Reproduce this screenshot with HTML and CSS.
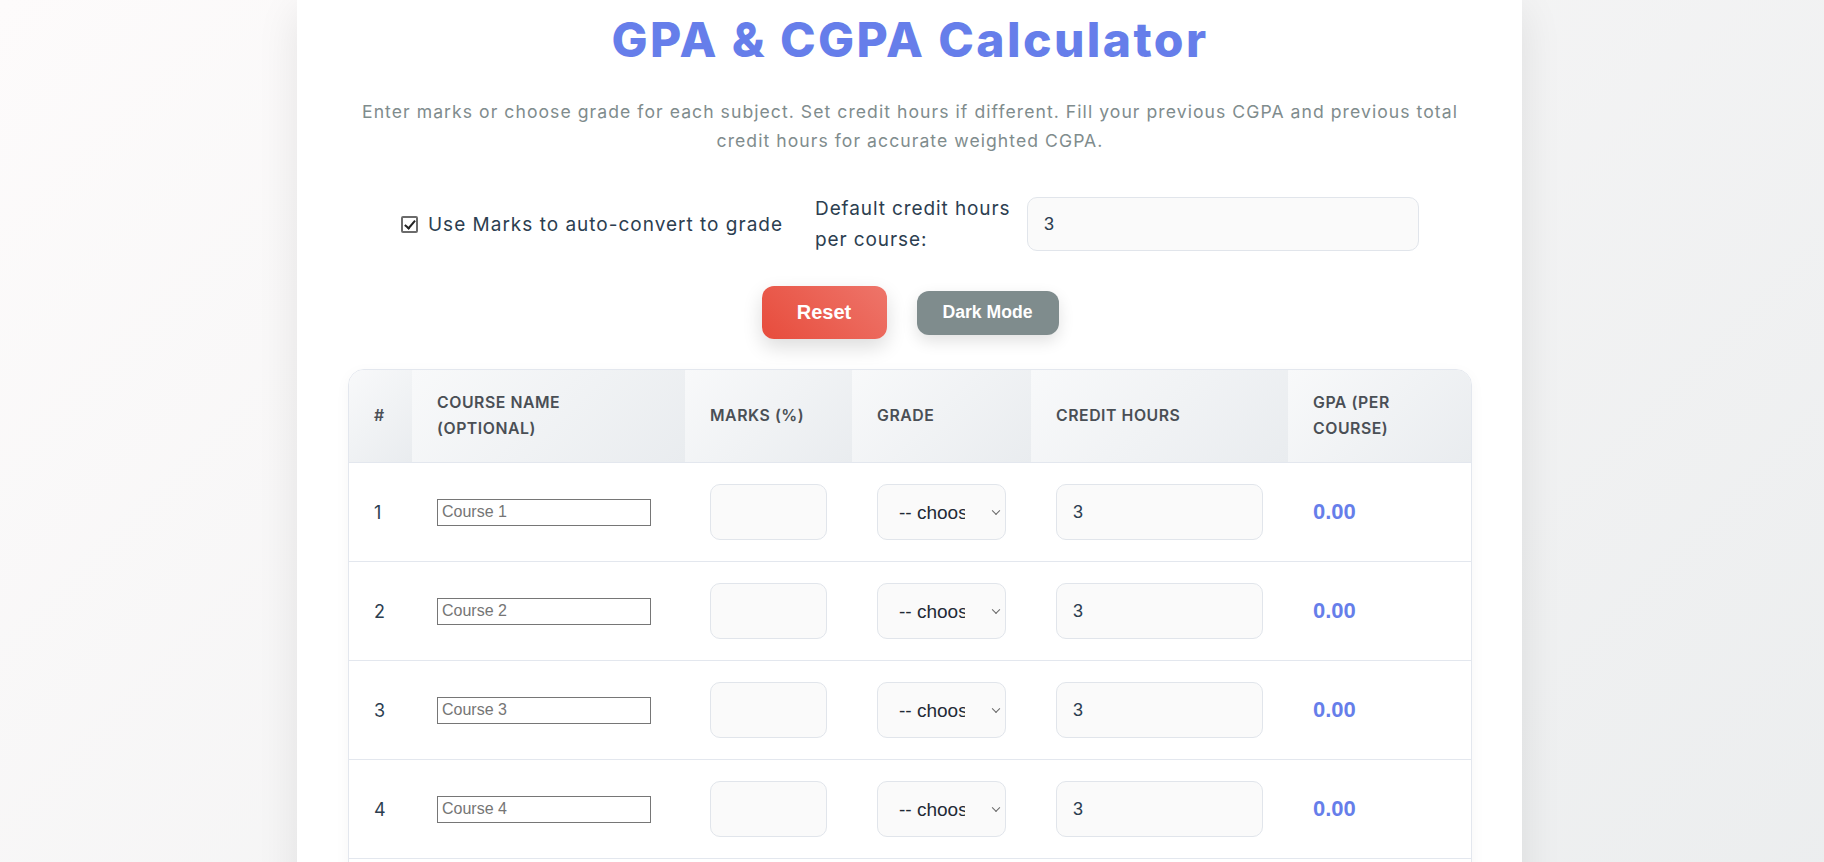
FILE: index.html
```html
<!DOCTYPE html>
<html lang="en">
<head>
<meta charset="utf-8">
<title>GPA &amp; CGPA Calculator</title>
<link rel="stylesheet" href="styles.css">
</head>
<body>
<div class="page">
  <main class="card">
    <h1 class="title">GPA &amp; CGPA Calculator</h1>
    <p class="subtitle">Enter marks or choose grade for each subject. Set credit hours if different. Fill your previous CGPA and previous total credit hours for accurate weighted CGPA.</p>

    <div class="controls">
      <label class="check-label"><input type="checkbox" class="chk" checked> <span>Use Marks to auto-convert to grade</span></label>
      <div class="default-group">
        <label class="default-label" for="defCredit">Default credit hours per course:</label>
        <input id="defCredit" class="field field-top" type="number" value="3">
      </div>
    </div>

    <div class="actions">
      <button class="btn btn-reset">Reset</button>
      <button class="btn btn-dark">Dark Mode</button>
    </div>

    <div class="table-wrap">
      <table class="courses">
        <colgroup>
          <col class="c-num"><col class="c-name"><col class="c-marks"><col class="c-grade"><col class="c-credit"><col class="c-gpa">
        </colgroup>
        <thead>
          <tr><th>#</th><th>Course Name (Optional)</th><th>Marks (%)</th><th>Grade</th><th>Credit Hours</th><th>GPA (per course)</th></tr>
        </thead>
        <tbody>
          <tr>
            <td>1</td>
            <td><input class="name-in" type="text" placeholder="Course 1"></td>
            <td><input class="field" type="number"></td>
            <td><div class="sel-wrap"><select class="field sel"><option>-- choose --</option><option>A</option><option>B</option></select></div></td>
            <td><input class="field" type="number" value="3"></td>
            <td class="gpa">0.00</td>
          </tr>
          <tr>
            <td>2</td>
            <td><input class="name-in" type="text" placeholder="Course 2"></td>
            <td><input class="field" type="number"></td>
            <td><div class="sel-wrap"><select class="field sel"><option>-- choose --</option><option>A</option><option>B</option></select></div></td>
            <td><input class="field" type="number" value="3"></td>
            <td class="gpa">0.00</td>
          </tr>
          <tr>
            <td>3</td>
            <td><input class="name-in" type="text" placeholder="Course 3"></td>
            <td><input class="field" type="number"></td>
            <td><div class="sel-wrap"><select class="field sel"><option>-- choose --</option><option>A</option><option>B</option></select></div></td>
            <td><input class="field" type="number" value="3"></td>
            <td class="gpa">0.00</td>
          </tr>
          <tr>
            <td>4</td>
            <td><input class="name-in" type="text" placeholder="Course 4"></td>
            <td><input class="field" type="number"></td>
            <td><div class="sel-wrap"><select class="field sel"><option>-- choose --</option><option>A</option><option>B</option></select></div></td>
            <td><input class="field" type="number" value="3"></td>
            <td class="gpa">0.00</td>
          </tr>
          <tr>
            <td>5</td>
            <td><input class="name-in" type="text" placeholder="Course 5"></td>
            <td><input class="field" type="number"></td>
            <td><div class="sel-wrap"><select class="field sel"><option>-- choose --</option><option>A</option><option>B</option></select></div></td>
            <td><input class="field" type="number" value="3"></td>
            <td class="gpa">0.00</td>
          </tr>
        </tbody>
      </table>
    </div>
  </main>
</div>
</body>
</html>
```

FILE: styles.css
```css
* { box-sizing: border-box; }

html, body { margin: 0; }

body {
  min-height: 100vh;
  background: linear-gradient(135deg, #fdfbfb 0%, #ebedee 100%);
  font-family: Inter, "Open Sans", sans-serif;
  color: #2c3e50;
}

.page {
  display: flex;
  justify-content: center;
  padding-right: 5px;
}

.card {
  width: 1225px;
  background: #ffffff;
  padding: 11px 50px 40px 51px;
  box-shadow: 0 10px 40px rgba(0, 0, 0, 0.09);
}

.title {
  margin: 0;
  text-align: center;
  font-size: 48px;
  line-height: 58px;
  font-weight: 800;
  letter-spacing: 2.4px;
  color: #667eea;
}

.subtitle {
  margin: 28px auto 0;
  max-width: 1110px;
  text-align: center;
  font-size: 17.6px;
  line-height: 29px;
  letter-spacing: 1.05px;
  color: #7f8c8d;
}

.controls {
  margin-top: 38px;
  display: flex;
  justify-content: center;
  align-items: center;
  gap: 32px;
}

.check-label {
  display: flex;
  align-items: center;
  gap: 10px;
  font-size: 19px;
  letter-spacing: 1px;
  color: #2c3e50;
}

.chk {
  appearance: none;
  -webkit-appearance: none;
  position: relative;
  margin: 0;
  width: 17px;
  height: 17px;
  border: 2px solid #6b6b6b;
  border-radius: 2px;
  background: #fff;
}

.chk:checked::after {
  content: "";
  position: absolute;
  left: 4px;
  top: 0px;
  width: 4px;
  height: 9px;
  border-right: 2px solid #222;
  border-bottom: 2px solid #222;
  transform: rotate(40deg);
}

.default-group {
  display: flex;
  align-items: center;
  gap: 12px;
}

.default-label {
  width: 200px;
  font-size: 19px;
  letter-spacing: 0.9px;
  line-height: 31px;
  color: #2c3e50;
}

.field {
  display: block;
  width: 100%;
  height: 56px;
  padding: 0 16px;
  border: 1px solid #e1e5eb;
  border-radius: 10px;
  background: #fafafa;
  font-family: "Liberation Sans", Arial, sans-serif;
  font-size: 18px;
  color: #2c3e50;
  outline: none;
}

.field::-webkit-outer-spin-button,
.field::-webkit-inner-spin-button { -webkit-appearance: none; margin: 0; }

.field-top {
  width: 392px;
  height: 54px;
}

.sel-wrap {
  position: relative;
}

.sel-wrap::after {
  content: "";
  position: absolute;
  right: 7px;
  top: 50%;
  width: 5px;
  height: 5px;
  border-right: 1.3px solid #666;
  border-bottom: 1.3px solid #666;
  transform: translateY(-70%) rotate(45deg);
  pointer-events: none;
}

.sel {
  appearance: none;
  -webkit-appearance: none;
  padding: 0 40px 0 21px;
  font-size: 19px;
  color: #1f2a36;
}

.actions {
  margin-top: 31px;
  display: flex;
  justify-content: center;
  align-items: center;
  gap: 30px;
}

.btn {
  border: none;
  color: #fff;
  font-family: "Liberation Sans", Arial, sans-serif;
  font-weight: 700;
  border-radius: 12px;
  cursor: pointer;
}

.btn-reset {
  width: 125px;
  height: 53px;
  font-size: 20px;
  background: linear-gradient(45deg, #e74c3c 0%, #ee756a 100%);
  box-shadow: 0 8px 20px rgba(0, 0, 0, 0.14);
}

.btn-dark {
  width: 142px;
  height: 44px;
  font-size: 17.6px;
  background: #7f8c8d;
  box-shadow: 0 6px 16px rgba(0, 0, 0, 0.12);
}

.table-wrap {
  margin-top: 30px;
  border: 1px solid #e3e7ee;
  border-radius: 16px;
  overflow: hidden;
  box-shadow: 0 4px 15px rgba(0, 0, 0, 0.04);
}

.courses {
  width: 100%;
  border-collapse: collapse;
  table-layout: fixed;
}

.c-num { width: 63px; }
.c-name { width: 273px; }
.c-marks { width: 167px; }
.c-grade { width: 179px; }
.c-credit { width: 257px; }
.c-gpa { width: 183px; }

.courses th {
  padding: 20px 25px;
  text-align: left;
  font-size: 15.8px;
  line-height: 26px;
  letter-spacing: 0.55px;
  font-weight: 600;
  text-transform: uppercase;
  color: #4a4f55;
  background: linear-gradient(135deg, #f8f9fa 0%, #e9ecef 100%);
  border-bottom: 1px solid #e3e7ee;
}

.courses td {
  padding: 21px 25px;
  font-size: 18px;
  color: #2c3e50;
  border-bottom: 1px solid #e3e7ee;
  background: #fff;
}

.name-in {
  width: 214px;
  height: 27px;
  padding: 2px 4px;
  font-family: "Liberation Sans", Arial, sans-serif;
  font-size: 16px;
  border: 1px solid #767676;
  border-radius: 0;
}

.name-in::placeholder { color: #757575; }

.courses td.gpa {
  font-family: "Liberation Sans", Arial, sans-serif;
  font-weight: 700;
  font-size: 22px;
  color: #667eea;
}
```
